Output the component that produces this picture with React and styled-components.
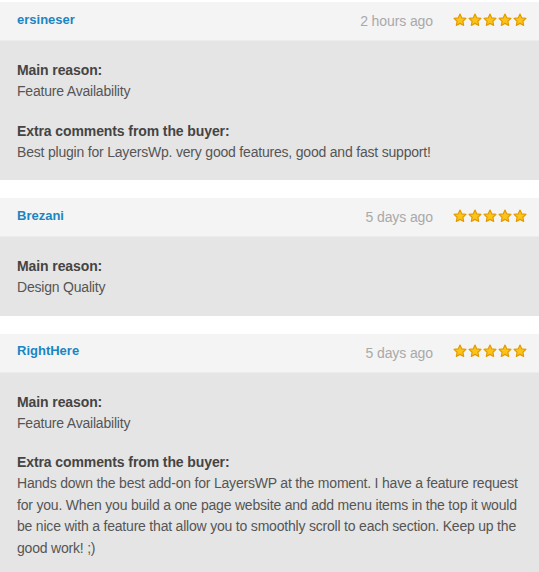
import React from "react";
import styled, { createGlobalStyle } from "styled-components";

const GlobalStyle = createGlobalStyle`
  body {
    margin: 0;
    background: #fff;
    font-family: "Liberation Sans", Arial, sans-serif;
  }
`;

const reviews = [
  {
    name: "ersineser",
    time: "2 hours ago",
    reason: "Feature Availability",
    comment: "Best plugin for LayersWp. very good features, good and fast support!",
  },
  {
    name: "Brezani",
    time: "5 days ago",
    reason: "Design Quality",
  },
  {
    name: "RightHere",
    time: "5 days ago",
    reason: "Feature Availability",
    comment:
      "Hands down the best add-on for LayersWP at the moment. I have a feature request for you. When you build a one page website and add menu items in the top it would be nice with a feature that allow you to smoothly scroll to each section. Keep up the good work! ;)",
  },
];

const Star = () => (
  <svg width="14" height="14" viewBox="0 0 24 24">
    <path
      d="M12 1.8l3.1 6.6 7.1.9-5.2 4.9 1.3 7.1L12 17.8l-6.3 3.5 1.3-7.1-5.2-4.9 7.1-.9z"
      fill="#fcc419"
      stroke="#e29a00"
      strokeWidth="2"
      strokeLinejoin="round"
    />
  </svg>
);

const App = () => {
  return (
    <>
      <GlobalStyle />
      <List>
        {reviews.map((r) => (
          <Card key={r.name}>
            <Header>
              <Name>{r.name}</Name>
              <Meta>
                <Time>{r.time}</Time>
                <Stars>
                  {[0, 1, 2, 3, 4].map((i) => (
                    <Star key={i} />
                  ))}
                </Stars>
              </Meta>
            </Header>
            <Body>
              <Section>
                <Label>Main reason:</Label>
                <Text>{r.reason}</Text>
              </Section>
              {r.comment && (
                <Section>
                  <Label>Extra comments from the buyer:</Label>
                  <Text>{r.comment}</Text>
                </Section>
              )}
            </Body>
          </Card>
        ))}
      </List>
    </>
  );
};

export default App;

const List = styled.div`
  display: flex;
  flex-direction: column;
  gap: 18px;
  padding-top: 2px;
`;

const Card = styled.div`
  display: flex;
  flex-direction: column;
`;

const Header = styled.div`
  display: flex;
  align-items: center;
  justify-content: space-between;
  height: 38px;
  padding: 0 12px 0 17px;
  background-color: #f4f4f4;
  border-bottom: 1px solid #ececec;
`;

const Name = styled.div`
  font-size: 13px;
  font-weight: bold;
  color: #1a85c2;
  margin-top: -4px;
`;

const Meta = styled.div`
  display: flex;
  align-items: center;
  gap: 20px;
`;

const Time = styled.div`
  font-size: 14px;
  color: #a9a9a9;
  letter-spacing: -0.1px;
`;

const Stars = styled.div`
  display: flex;
  gap: 1px;
  margin-top: -3px;
`;

const Body = styled.div`
  display: flex;
  flex-direction: column;
  gap: 18px;
  padding: 19px 10px 17px 17px;
  background-color: #e5e5e5;
`;

const Section = styled.div`
  display: flex;
  flex-direction: column;
`;

const Label = styled.div`
  font-size: 14px;
  font-weight: bold;
  color: #444;
  line-height: 21px;
  letter-spacing: -0.1px;
`;

const Text = styled.div`
  font-size: 14px;
  color: #555;
  line-height: 21.5px;
  letter-spacing: -0.2px;
`;
